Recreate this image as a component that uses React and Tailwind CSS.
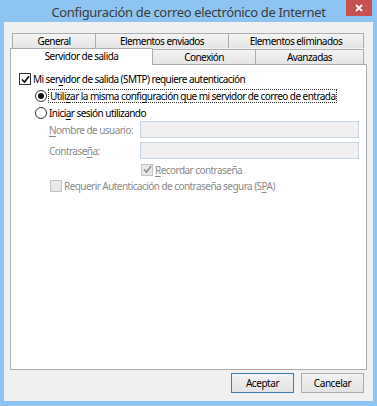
import React from 'react';

const font = { fontFamily: '"Noto Sans", "Open Sans", sans-serif' };

function U({ children }) {
  return <span className="underline underline-offset-[1.5px]">{children}</span>;
}

function Check({ checked, disabled }) {
  return (
    <span
      className={`flex h-[12px] w-[12px] shrink-0 items-center justify-center border ${
        disabled ? 'border-[#c4c4c4] bg-[#e8e8e8]' : 'border-[#333] bg-white'
      }`}
    >
      {checked && (
        <svg width="9" height="9" viewBox="0 0 9 9">
          <path d="M1 4.5 L3.5 7 L8 1.2" fill="none" stroke={disabled ? '#8c8c8c' : '#000'} strokeWidth="1.6" />
        </svg>
      )}
    </span>
  );
}

function Radio({ checked }) {
  return (
    <span className="flex h-[12px] w-[12px] shrink-0 items-center justify-center rounded-full border border-[#333] bg-white">
      {checked && <span className="h-[6px] w-[6px] rounded-full bg-[#111]" />}
    </span>
  );
}

function Tab({ label, selected, className = '' }) {
  if (selected) {
    return (
      <div className={`relative z-10 -mb-px flex h-[17px] items-start justify-center border border-b-0 border-[#adadad] bg-white pt-[2px] ${className}`}>
        {label}
      </div>
    );
  }
  return (
    <div className={`flex h-[15px] items-center justify-center border border-b-0 border-[#adadad] bg-gradient-to-b from-[#f3f3f3] to-[#e5e5e5] ${className}`}>
      {label}
    </div>
  );
}

export default function App() {
  return (
    <div className="flex h-[406px] w-[377px] flex-col bg-[#8ec4f2] text-[10px] leading-none tracking-[-0.55px] text-black" style={font}>
      {/* title bar */}
      <div className="relative flex h-[22px] shrink-0 items-center justify-center pt-[2px] text-[13px] tracking-[-0.35px] text-[#3c3c3c]">
        Configuración de correo electrónico de Internet
        <div className="absolute right-[5px] top-0 flex h-[16px] w-[26px] items-center justify-center bg-[#c75050]">
          <svg width="8" height="8" viewBox="0 0 8 8">
            <path d="M1 1 L7 7 M7 1 L1 7" stroke="white" strokeWidth="1.8" />
          </svg>
        </div>
      </div>

      {/* client area */}
      <div className="mx-[4px] mb-[5px] flex flex-1 flex-col bg-[#f0f0f0] px-[6px] pt-[11px]">
        {/* tab rows */}
        <div className="flex pl-[2px] pr-[3px]">
          <Tab label="General" className="w-[84px]" />
          <Tab label="Elementos enviados" className="-ml-px w-[134px]" />
          <Tab label="Elementos eliminados" className="-ml-px w-[136px]" />
        </div>
        <div className="flex items-end pr-[3px]">
          <Tab label="Servidor de salida" selected className="w-[143px]" />
          <Tab label="Conexión" className="-ml-px w-[104px]" />
          <Tab label="Avanzadas" className="-ml-px w-[109px]" />
        </div>

        {/* panel */}
        <div className="flex h-[306px] flex-col border border-[#adadad] bg-white pl-[8px] pt-[7px]">
          <div className="flex h-[14px] items-center gap-[2px]">
            <Check checked />
            <span>Mi ser<U>v</U>idor de salida (SMTP) requiere autenticación</span>
          </div>

          <div className="mt-[3px] flex h-[14px] items-center gap-[1px] pl-[16px]">
            <Radio checked />
            <span className="flex h-[14px] items-center border border-dotted border-[#333] px-[1px]">
              <span>Utili<U>z</U>ar la misma configuración que mi servidor de correo de entrada</span>
            </span>
          </div>

          <div className="mt-[3px] flex h-[14px] items-center gap-[2px] pl-[16px]">
            <Radio />
            <span>Inici<U>a</U>r sesión utilizando</span>
          </div>

          <div className="mt-[1px] flex h-[17px] items-center pl-[30px] text-[#8a8a8a]">
            <span className="w-[91px]"><U>N</U>ombre de usuario:</span>
            <div className="h-[17px] w-[219px] border border-[#c6d4e2] bg-[#f0f0f0]" />
          </div>

          <div className="mt-[4px] flex h-[17px] items-center pl-[30px] text-[#8a8a8a]">
            <span className="w-[91px]">Contrase<U>ñ</U>a:</span>
            <div className="h-[17px] w-[219px] border border-[#c6d4e2] bg-[#f0f0f0]" />
          </div>

          <div className="mt-[4px] flex h-[13px] items-center gap-[2px] pl-[122px] text-[#8a8a8a]">
            <Check checked disabled />
            <span><U>R</U>ecordar contraseña</span>
          </div>

          <div className="mt-[3px] flex h-[13px] items-center gap-[2px] pl-[31px] text-[#8a8a8a]">
            <Check disabled />
            <span>Requerir Autenticación de contraseña segura (S<U>P</U>A)</span>
          </div>
        </div>

        {/* buttons */}
        <div className="mt-[3px] flex justify-end gap-[7px] pr-[3px]">
          <button className="h-[20px] w-[63px] border border-[#3c7fb1] bg-gradient-to-b from-[#f2f2f2] to-[#e3e3e3] text-[10px] tracking-[-0.45px] text-black">
            Aceptar
          </button>
          <button className="h-[20px] w-[63px] border border-[#acacac] bg-gradient-to-b from-[#f2f2f2] to-[#e3e3e3] text-[10px] tracking-[-0.45px] text-black">
            Cancelar
          </button>
        </div>
      </div>
    </div>
  );
}
